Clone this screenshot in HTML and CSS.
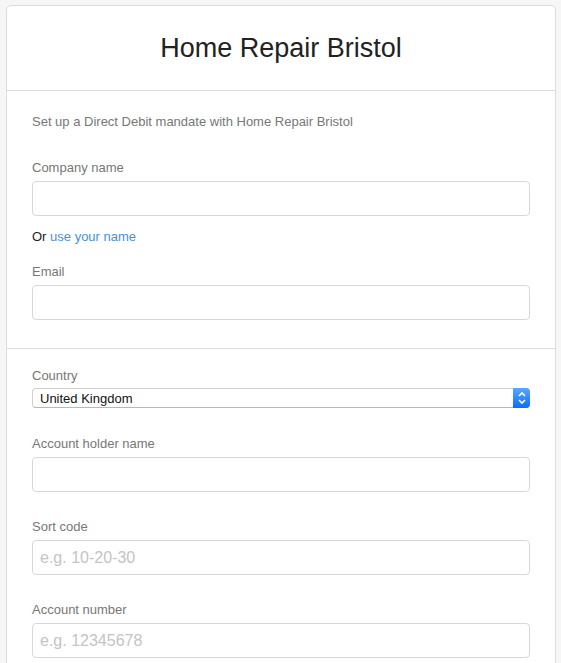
FILE: index.html
```html
<!DOCTYPE html>
<html>
<head>
<meta charset="utf-8">
<link rel="stylesheet" href="styles.css">
</head>
<body>
<div class="card">
  <div class="card-header">
    <h1 class="title">Home Repair Bristol</h1>
  </div>
  <div class="section">
    <p class="intro">Set up a Direct Debit mandate with Home Repair Bristol</p>
    <div class="field">
      <label class="label">Company name</label>
      <input class="input" type="text">
    </div>
    <p class="or">Or <a class="link" href="#">use your name</a></p>
    <div class="field">
      <label class="label">Email</label>
      <input class="input" type="text">
    </div>
  </div>
  <div class="section section-bank">
    <div class="field field-select">
      <label class="label">Country</label>
      <div class="select-wrap">
        <select class="select"><option>United Kingdom</option></select>
        <span class="stepper">
          <svg width="16" height="20" viewBox="0 0 16 20"><path d="M5 8 L8 5 L11 8 M5 12 L8 15 L11 12" fill="none" stroke="#fff" stroke-width="1.6"/></svg>
        </span>
      </div>
    </div>
    <div class="field">
      <label class="label">Account holder name</label>
      <input class="input" type="text">
    </div>
    <div class="field">
      <label class="label">Sort code</label>
      <input class="input" type="text" placeholder="e.g. 10-20-30">
    </div>
    <div class="field">
      <label class="label">Account number</label>
      <input class="input" type="text" placeholder="e.g. 12345678">
    </div>
  </div>
</div>
</body>
</html>
```
FILE: styles.css
```css
html, body { margin: 0; }
html::-webkit-scrollbar { display: none; }
body {
  background: #f6f6f6;
  padding: 5px 5px 0 6px;
  font-family: "Liberation Sans", Arial, sans-serif;
  color: #333;
}
.card {
  background: #fff;
  border: 1px solid #dcdcdc;
  border-radius: 5px;
  padding-bottom: 60px;
}
.card-header {
  height: 84px;
  border-bottom: 1px solid #dcdcdc;
  display: flex;
  align-items: center;
  justify-content: center;
}
.title {
  margin: 0;
  font-size: 27px;
  font-weight: normal;
  color: #222;
  line-height: 30px;
}
.section {
  padding: 22px 25px 28px;
  border-bottom: 1px solid #dcdcdc;
}
.section-bank {
  padding-top: 18px;
  border-bottom: none;
}
.intro {
  margin: 0 0 28px;
  font-size: 13px;
  line-height: 18px;
  color: #777;
}
.field {
  display: flex;
  flex-direction: column;
  margin-bottom: 26px;
}
.label {
  font-size: 13px;
  line-height: 18px;
  color: #777;
  margin-bottom: 4px;
}
.input {
  box-sizing: border-box;
  height: 35px;
  width: 100%;
  border: 1px solid #d8d8d8;
  border-radius: 4px;
  padding: 0 7px;
  font-family: "Liberation Sans", Arial, sans-serif;
  font-size: 16px;
  color: #333;
  outline: none;
}
.input::placeholder { color: #c4c4c4; }
.or {
  margin: -14px 0 17px;
  font-size: 13px;
  line-height: 18px;
  color: #222;
}
.link { color: #4a8fdc; text-decoration: none; }
.section > .field:last-child { margin-bottom: 0; }
.field-select { margin-bottom: 27px; }
.field-select .label { margin-bottom: 3px; }
.select-wrap {
  position: relative;
  height: 20px;
}
.select {
  -webkit-appearance: none;
  appearance: none;
  box-sizing: border-box;
  width: 100%;
  height: 20px;
  border: 1px solid #cfcfcf;
  border-bottom-color: #b8b8b8;
  border-radius: 4px;
  background: #fff;
  padding: 0 0 0 7px;
  font-family: "Liberation Sans", Arial, sans-serif;
  font-size: 13px;
  color: #111;
  outline: none;
}
.stepper {
  position: absolute;
  right: 0;
  top: 0;
  width: 17px;
  height: 20px;
  border-radius: 0 4px 4px 0;
  background: linear-gradient(#5aa8ff, #0a6cff);
  display: flex;
  align-items: center;
  justify-content: center;
}
.stepper svg { display: block; }
```
